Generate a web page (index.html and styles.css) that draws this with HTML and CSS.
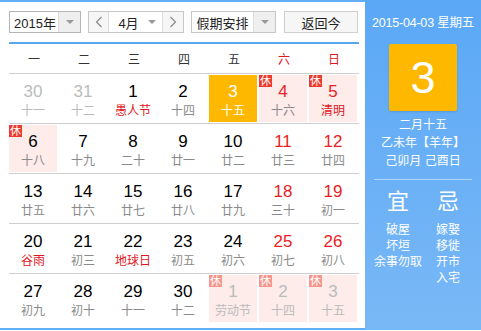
FILE: index.html
```html
<!DOCTYPE html>
<html lang="zh-CN">
<head>
<meta charset="utf-8">
<link rel="stylesheet" href="styles.css">
</head>
<body>
<div class="cal">
  <div class="main">
    <div class="toolbar">
      <div class="sel sel-year"><span class="sel-text">2015年</span><span class="sel-arrow"><i class="tri"></i></span></div>
      <div class="month-group">
        <span class="nav"><svg width="8" height="12" viewBox="0 0 8 12"><path d="M6.5 1 L1.5 6 L6.5 11" fill="none" stroke="#888" stroke-width="1.2"/></svg></span>
        <span class="sel-text month-text">4月</span><span class="sel-arrow plain"><i class="tri"></i></span>
        <span class="nav"><svg width="8" height="12" viewBox="0 0 8 12"><path d="M1.5 1 L6.5 6 L1.5 11" fill="none" stroke="#888" stroke-width="1.2"/></svg></span>
      </div>
      <div class="sel sel-holiday"><span class="sel-text">假期安排</span><span class="sel-arrow"><i class="tri"></i></span></div>
      <div class="btn">返回今</div>
    </div>
    <div class="blue-line"></div>
    <div class="week-head">
      <span>一</span><span>二</span><span>三</span><span>四</span><span>五</span><span class="red">六</span><span class="red">日</span>
    </div>
    <div class="row">
      <div class="cell"><div class="in other"><b>30</b><em>十一</em></div></div>
      <div class="cell"><div class="in other"><b>31</b><em>十二</em></div></div>
      <div class="cell"><div class="in"><b>1</b><em class="fest">愚人节</em></div></div>
      <div class="cell"><div class="in"><b>2</b><em>十四</em></div></div>
      <div class="cell"><div class="in today"><b>3</b><em>十五</em></div></div>
      <div class="cell"><div class="in rest wk"><i class="badge">休</i><b>4</b><em>十六</em></div></div>
      <div class="cell"><div class="in rest wk"><i class="badge">休</i><b>5</b><em class="fest">清明</em></div></div>
    </div>
    <div class="row">
      <div class="cell"><div class="in rest"><i class="badge">休</i><b>6</b><em>十八</em></div></div>
      <div class="cell"><div class="in"><b>7</b><em>十九</em></div></div>
      <div class="cell"><div class="in"><b>8</b><em>二十</em></div></div>
      <div class="cell"><div class="in"><b>9</b><em>廿一</em></div></div>
      <div class="cell"><div class="in"><b>10</b><em>廿二</em></div></div>
      <div class="cell"><div class="in wk"><b>11</b><em>廿三</em></div></div>
      <div class="cell"><div class="in wk"><b>12</b><em>廿四</em></div></div>
    </div>
    <div class="row">
      <div class="cell"><div class="in"><b>13</b><em>廿五</em></div></div>
      <div class="cell"><div class="in"><b>14</b><em>廿六</em></div></div>
      <div class="cell"><div class="in"><b>15</b><em>廿七</em></div></div>
      <div class="cell"><div class="in"><b>16</b><em>廿八</em></div></div>
      <div class="cell"><div class="in"><b>17</b><em>廿九</em></div></div>
      <div class="cell"><div class="in wk"><b>18</b><em>三十</em></div></div>
      <div class="cell"><div class="in wk"><b>19</b><em>初一</em></div></div>
    </div>
    <div class="row">
      <div class="cell"><div class="in"><b>20</b><em class="fest">谷雨</em></div></div>
      <div class="cell"><div class="in"><b>21</b><em>初三</em></div></div>
      <div class="cell"><div class="in"><b>22</b><em class="fest">地球日</em></div></div>
      <div class="cell"><div class="in"><b>23</b><em>初五</em></div></div>
      <div class="cell"><div class="in"><b>24</b><em>初六</em></div></div>
      <div class="cell"><div class="in wk"><b>25</b><em>初七</em></div></div>
      <div class="cell"><div class="in wk"><b>26</b><em>初八</em></div></div>
    </div>
    <div class="row last">
      <div class="cell"><div class="in"><b>27</b><em>初九</em></div></div>
      <div class="cell"><div class="in"><b>28</b><em>初十</em></div></div>
      <div class="cell"><div class="in"><b>29</b><em>十一</em></div></div>
      <div class="cell"><div class="in"><b>30</b><em>十二</em></div></div>
      <div class="cell"><div class="in rest other"><i class="badge">休</i><b>1</b><em>劳动节</em></div></div>
      <div class="cell"><div class="in rest other"><i class="badge">休</i><b>2</b><em>十四</em></div></div>
      <div class="cell"><div class="in rest other"><i class="badge">休</i><b>3</b><em>十五</em></div></div>
    </div>
  </div>
  <div class="side">
    <div class="side-date">2015-04-03 星期五</div>
    <div class="big-day">3</div>
    <div class="lunar">
      <div>二月十五</div>
      <div>乙未年【羊年】</div>
      <div>己卯月 己酉日</div>
    </div>
    <div class="side-sep"></div>
    <div class="yiji">
      <div class="yj-col">
        <div class="yj-title">宜</div>
        <div>破屋</div><div>坏垣</div><div>余事勿取</div>
      </div>
      <div class="yj-col">
        <div class="yj-title">忌</div>
        <div>嫁娶</div><div>移徙</div><div>开市</div><div>入宅</div>
      </div>
    </div>
  </div>
</div>
</body>
</html>
```
FILE: styles.css
```css
* { box-sizing: border-box; }
html, body { margin: 0; padding: 0; background: #fff; }
body {
  font-family: "Liberation Sans", "Noto Sans CJK SC", sans-serif;
  font-size: 12px;
  color: #333;
}
.cal {
  display: flex;
  width: 481px;
  height: 330px;
}
.main {
  width: 365px;
  padding: 0 6px 0 9px;
  border-top: 2px solid #62aef5;
  border-bottom: 2px solid #62aef5;
}
.toolbar {
  display: flex;
  height: 22px;
  margin: 9px 0;
}
.sel {
  display: flex;
  border: 1px solid #b5b5b5;
  background: #fff;
}
.sel-text {
  flex: 1;
  display: flex;
  align-items: center;
  justify-content: center;
  font-size: 13px;
  color: #222;
}
.sel-arrow {
  width: 22px;
  display: flex;
  align-items: center;
  justify-content: center;
  background: #efefef;
  border-left: 1px solid #ddd;
}
.sel-arrow.plain { background: #fff; border-left: none; width: 20px; }
.tri {
  width: 0; height: 0;
  border-left: 4px solid transparent;
  border-right: 4px solid transparent;
  border-top: 4px solid #999;
}
.sel-year { width: 72px; }
.sel-year .sel-text { justify-content: flex-end; padding-right: 2px; }
.month-group {
  display: flex;
  width: 96px;
  margin-left: 7px;
  border: 1px solid #c8c8c8;
}
.nav {
  width: 20px;
  display: flex;
  align-items: center;
  justify-content: center;
  background: #f6f6f6;
}
.nav:first-child { border-right: 1px solid #ddd; }
.nav:last-child { border-left: 1px solid #ddd; width: 21px; }
.month-text { padding-left: 6px; }
.sel-holiday { width: 85px; margin-left: 7px; border-color: #c8c8c8; }
.btn {
  width: 74px;
  margin-left: 8px;
  border: 1px solid #cfcfcf;
  background: #f6f6f6;
  display: flex;
  align-items: center;
  justify-content: center;
  font-size: 13px;
  color: #222;
}
.blue-line { height: 2px; width: 350px; background: #5aa6ee; }
.week-head {
  display: flex;
  width: 350px;
  height: 30px;
  border-bottom: 1px solid #cfcfcf;
  padding-top: 4px;
}
.week-head span {
  width: 50px;
  text-align: center;
  line-height: 24px;
  font-size: 12px;
  color: #333;
}
.week-head .red { color: #e4161c; }
.row {
  display: flex;
  width: 350px;
  height: 50px;
  border-bottom: 1px solid #cfcfcf;
}
.row.last { border-bottom: none; height: 49px; }
.cell { width: 50px; padding: 1px 2px 1px 0; }
.in {
  position: relative;
  height: 47px;
  padding-top: 7px;
  text-align: center;
}
.in b {
  display: block;
  font-weight: normal;
  font-size: 17px;
  line-height: 20px;
  color: #000;
  font-family: "Liberation Sans", sans-serif;
}
.in em {
  display: block;
  font-style: normal;
  font-size: 12px;
  line-height: 18px;
  color: #8a8a8a;
}
.in em.fest { color: #e0161e; }
.in.wk b { color: #ec1c24; }
.in.rest { background: #fdecea; }
.in.other b { color: #bbb; }
.in.other em { color: #bbb; }
.in.today { background: #ffb800; }
.in.today b, .in.today em { color: #fff; }
.badge {
  position: absolute;
  left: 0; top: 0;
  width: 13px; height: 12px;
  background: #ec3a2e;
  color: #fff;
  font-style: normal;
  font-size: 11px;
  line-height: 12px;
  text-align: center;
}
.in.other .badge { background: #f6958c; }
.side {
  width: 116px;
  height: 330px;
  background: linear-gradient(#5ba8f6, #79b8f6);
  color: #fff;
  display: flex;
  flex-direction: column;
  align-items: center;
  padding-top: 15px;
}
.side-date { font-size: 12.5px; line-height: 16px; white-space: nowrap; letter-spacing: -0.2px; }
.big-day {
  width: 68px;
  height: 67px;
  margin-top: 13px;
  background: #ffb800;
  border-radius: 2px;
  box-shadow: 0 1px 2px rgba(0,0,0,0.12);
  font-size: 45px;
  line-height: 67px;
  text-align: center;
  font-family: "Liberation Sans", sans-serif;
}
.lunar { margin-top: 5px; text-align: center; line-height: 18px; font-size: 12px; }
.side-sep { width: 98px; height: 1px; margin-top: 9px; background: rgba(255,255,255,0.45); }
.yiji { display: flex; margin-top: 9px; }
.yj-col { width: 50px; text-align: center; font-size: 12px; line-height: 16px; white-space: nowrap; }
.yj-title { font-size: 22px; line-height: 26px; margin-bottom: 7px; }
```
